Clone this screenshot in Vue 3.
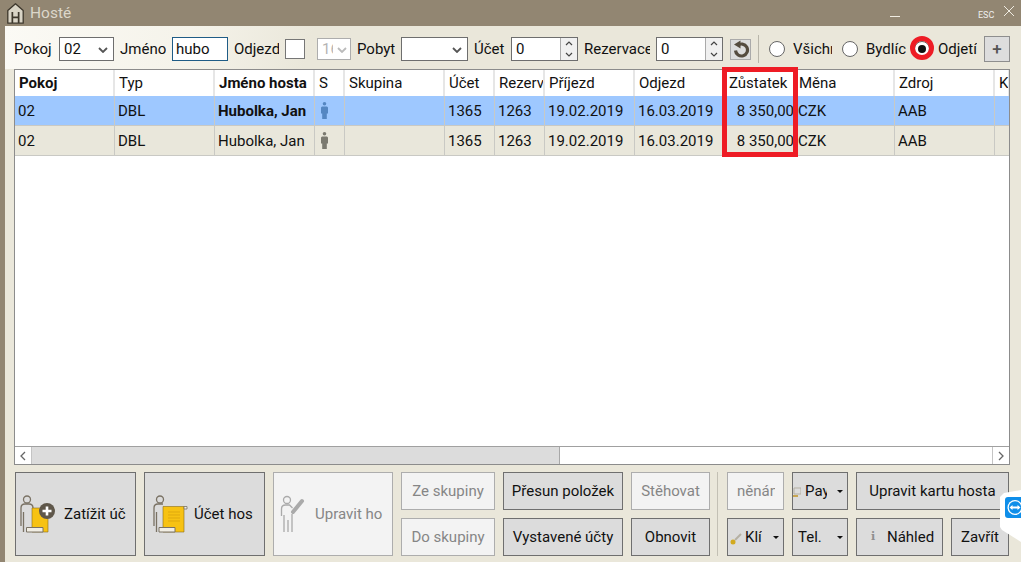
<script setup>
const columns = [
  { label: 'Pokoj', width: 100, bold: true },
  { label: 'Typ', width: 100 },
  { label: 'Jméno hosta', width: 100, bold: true },
  { label: 'S', width: 30 },
  { label: 'Skupina', width: 100 },
  { label: 'Účet', width: 50 },
  { label: 'Rezervace', width: 50 },
  { label: 'Příjezd', width: 90 },
  { label: 'Odjezd', width: 90 },
  { label: 'Zůstatek', width: 70 },
  { label: 'Měna', width: 100 },
  { label: 'Zdroj', width: 100 },
  { label: 'Kredit', width: 15 }
]
const gridTemplate = columns.map(c => c.width + 'px').join(' ')

const rows = [
  { selected: true, cells: ['02', 'DBL', 'Hubolka, Jan', '', '', '1365', '1263', '19.02.2019', '16.03.2019', '8 350,00', 'CZK', 'AAB', ''] },
  { selected: false, cells: ['02', 'DBL', 'Hubolka, Jan', '', '', '1365', '1263', '19.02.2019', '16.03.2019', '8 350,00', 'CZK', 'AAB', ''] }
]
</script>

<template>
  <div class="window">
    <header class="titlebar">
      <svg class="home" width="17" height="21" viewBox="0 0 17 21">
        <path d="M.8 20.200V7.500L8.500.8l7.700 6.700v12.700z" fill="#d9d4c6" stroke="#3d372c" stroke-width="1.300" stroke-linejoin="round" />
        <path d="M4.500 9h1.700v4.500h4.600V9h1.700v11h-1.700v-4.800H6.200V20H4.500z" fill="#3d372c" />
      </svg>
      <span class="title">Hosté</span>
      <span class="minimize"></span>
      <span class="esc">ESC</span>
      <svg class="close" width="14" height="10" viewBox="0 0 14 10">
        <path d="M2 0l10 10M12 0L2 10" stroke="#f0ece2" stroke-width="1" fill="none" />
      </svg>
    </header>

    <main class="content">
      <div class="toolbar">
        <span class="label w-39">Pokoj</span>
        <div class="field select w-55"><span>02</span><svg class="chev" width="10" height="6" viewBox="0 0 10 6"><path d="M1 1l4 4 4-4" /></svg></div>
        <span class="label w-46">Jméno</span>
        <div class="field focus w-56"><span>hubo</span></div>
        <span class="label w-45">Odjezd</span>
        <div class="check"></div>
        <div class="field select disabled w-34"><span>16</span><svg class="chev" width="10" height="6" viewBox="0 0 10 6"><path d="M1 1l4 4 4-4" /></svg></div>
        <span class="label w-38">Pobyt</span>
        <div class="field select w-67"><svg class="chev" width="10" height="6" viewBox="0 0 10 6"><path d="M1 1l4 4 4-4" /></svg></div>
        <span class="label w-31">Účet</span>
        <div class="field spin w-67">
          <span>0</span>
          <div class="spinner">
            <svg width="16" height="11" viewBox="0 0 16 11"><path d="M5 7l3-3 3 3" /></svg>
            <svg width="16" height="11" viewBox="0 0 16 11"><path d="M5 4l3 3 3-3" /></svg>
          </div>
        </div>
        <span class="label w-66">Rezervace</span>
        <div class="field spin w-67">
          <span>0</span>
          <div class="spinner">
            <svg width="16" height="11" viewBox="0 0 16 11"><path d="M5 7l3-3 3 3" /></svg>
            <svg width="16" height="11" viewBox="0 0 16 11"><path d="M5 4l3 3 3-3" /></svg>
          </div>
        </div>
        <button class="refresh">
          <svg width="18" height="18" viewBox="0 0 18 18">
            <path d="M5.500 5.500a6 6 0 1 1-2 5" fill="none" stroke="#554c3f" stroke-width="3.200" />
            <path d="M8.500 0.500v8L2 4.500z" fill="#554c3f" />
          </svg>
        </button>
        <span class="divider"></span>
        <span class="radio"></span>
        <span class="label radio-label w-39">Všichni</span>
        <span class="radio"></span>
        <span class="label radio-label w-40">Bydlíc</span>
        <span class="radio checked"></span>
        <span class="label odjeti">Odjetí</span>
        <button class="plus">+</button>
      </div>

      <section class="grid">
        <div class="row header" :style="{ gridTemplateColumns: gridTemplate }">
          <div v-for="col in columns" :key="col.label" class="cell" :class="{ bold: col.bold }">{{ col.label }}</div>
        </div>
        <div
          v-for="(row, r) in rows"
          :key="r"
          class="row body"
          :class="{ selected: row.selected }"
          :style="{ gridTemplateColumns: gridTemplate }"
        >
          <div
            v-for="(cell, c) in row.cells"
            :key="c"
            class="cell"
            :class="{ bold: c === 2 && row.selected, money: c === 9 }"
          >
            <svg v-if="c === 3" width="7" height="17" viewBox="0 0 7 17" class="person">
              <circle cx="3.500" cy="1.800" r="1.800" :fill="row.selected ? '#5587c2' : '#7b7a70'" />
              <path d="M1 4.500h5l1 1v6H5.800V17H1.200v-5.500H0v-6z" :fill="row.selected ? '#5587c2' : '#7b7a70'" />
            </svg>
            <template v-else>{{ cell }}</template>
          </div>
        </div>
        <div class="spacer"></div>
        <div class="scrollbar">
          <span class="arrow"><svg width="8" height="10" viewBox="0 0 8 10"><path d="M6 1L2 5l4 4" /></svg></span>
          <span class="thumb"></span>
          <span class="track"></span>
          <span class="arrow right"><svg width="8" height="10" viewBox="0 0 8 10"><path d="M2 1l4 4-4 4" /></svg></span>
        </div>
      </section>

      <footer class="actions">
        <button class="btn big">
          <svg width="38" height="38" viewBox="0 0 38 38" class="big-icon">
            <circle cx="7" cy="4.500" r="3.500" fill="none" stroke="#7a7264" stroke-width="1.300" />
            <path d="M1 31V13q0-4 4-4h4q4 0 4 4M3.500 37V17M10 37v-5" fill="none" stroke="#7a7264" stroke-width="1.300" />
            <path d="M12 13h16v24H12z" fill="#f7c213" stroke="#8a6d1b" stroke-width=".6" />
            <path d="M6.500 32.500H23v4.500H6.500z" fill="#f1eee4" stroke="#7a7264" stroke-width="1" />
            <circle cx="27" cy="16" r="8" fill="#5f574a" />
            <path d="M27 11.500v9M22.500 16h9" stroke="#fff" stroke-width="2.600" />
          </svg>
          <span class="big-label l-zatizit">Zatížit úč</span>
        </button>
        <button class="btn big">
          <svg width="38" height="38" viewBox="0 0 38 38" class="big-icon second">
            <circle cx="7" cy="4.500" r="3.500" fill="none" stroke="#7a7264" stroke-width="1.300" />
            <path d="M1 31V13q0-4 4-4h5M3.500 37V17" fill="none" stroke="#7a7264" stroke-width="1.300" />
            <path d="M10 11.500h21V37H10z" fill="#f7c213" stroke="#8a6d1b" stroke-width=".6" />
            <path d="M31 11.500h3V14h-3z" fill="#f1eee4" stroke="#7a7264" stroke-width=".8" />
            <path d="M15 17h12M15 20h12M15 23h12M15 26h12" stroke="#dfa90e" stroke-width="1" />
            <path d="M6 32.500h16v4.500H6z" fill="#f1eee4" stroke="#7a7264" stroke-width="1" />
          </svg>
          <span class="big-label l-ucet">Účet hos</span>
        </button>
        <button class="btn big off">
          <svg width="30" height="38" viewBox="0 0 30 38" class="big-icon edit">
            <circle cx="7" cy="5" r="3.500" fill="none" stroke="#aaa" stroke-width="1.300" />
            <path d="M1.500 21V14q0-4 4-4h4l3 3M4 37V20M8 37V25M12 37V19" fill="none" stroke="#aaa" stroke-width="1.300" />
            <path d="M13 17l9-11" stroke="#aaa" stroke-width="4" stroke-linecap="round" />
          </svg>
          <span class="big-label l-upravit">Upravit ho</span>
        </button>

        <div class="stack c-94">
          <button class="btn off">Ze skupiny</button>
          <button class="btn off">Do skupiny</button>
        </div>
        <div class="stack c-120">
          <button class="btn">Přesun položek</button>
          <button class="btn">Vystavené účty</button>
        </div>
        <div class="stack c-79">
          <button class="btn off">Stěhovat</button>
          <button class="btn">Obnovit</button>
        </div>
        <span class="vline"></span>
        <div class="stack c-57">
          <button class="btn off clip"><span>něnán</span></button>
          <button class="btn drop">
            <svg width="12" height="12" viewBox="0 0 12 12" class="key">
              <circle cx="3" cy="9" r="2.500" fill="#d2aa20" />
              <path d="M5 7l6-6" stroke="#b5b0a3" stroke-width="2" />
            </svg>
            <span class="drop-text k">Klí</span>
            <i class="caret"></i>
          </button>
        </div>
        <div class="stack c-56">
          <button class="btn drop">
            <svg width="8" height="10" viewBox="0 0 8 10" class="pay">
              <path d="M1 1h7v6H1z" fill="none" stroke="#b5b0a3" />
              <path d="M0 8h5v2H0z" fill="#c7a552" />
            </svg>
            <span class="drop-text p">Pay</span>
            <i class="caret"></i>
          </button>
          <button class="btn drop">
            <span class="drop-text t">Tel.</span>
            <i class="caret"></i>
          </button>
        </div>
        <div class="stack c-153">
          <button class="btn wide">Upravit kartu hosta</button>
          <div class="pair">
            <button class="btn nahled"><span class="info">i</span>Náhled</button>
            <button class="btn zavrit">Zavřít</button>
          </div>
        </div>
      </footer>

      <div class="mark mark-column"></div>
      <div class="mark mark-radio"></div>
      <div class="teamviewer">
        <svg width="20" height="21" viewBox="0 0 20 21">
          <rect width="20" height="21" rx="3" fill="#0e8ee9" />
          <circle cx="10" cy="10.500" r="7.500" fill="#fff" />
          <circle cx="10" cy="10.500" r="6.200" fill="#0e8ee9" />
          <path d="M4.500 10.500L7.500 8v1.500h5V8l3 2.500-3 2.500v-1.500h-5V13z" fill="#fff" />
        </svg>
      </div>
    </main>
  </div>
</template>

<style>
html, body {
  margin: 0;
  overflow: hidden;
}
</style>

<style scoped>
.window {
  width: 1021px;
  height: 562px;
  display: flex;
  flex-direction: column;
  background: #928672;
  font-family: Roboto, "Liberation Sans", sans-serif;
  font-size: 15px;
  color: #111;
  overflow: hidden;
}

.titlebar {
  height: 26px;
  flex: none;
  display: flex;
  align-items: center;
  padding-left: 7px;
  color: #dcd7ca;
}
.home { flex: none; }
.title { margin-left: 6px; font-size: 15.500px; }
.minimize {
  width: 10px;
  height: 1px;
  background: #f0ece2;
  margin-left: auto;
  margin-top: 7px;
}
.esc {
  margin-left: 78px;
  font-size: 9px;
  color: #eee;
  margin-top: 3px;
  width: 24px;
}
.close {
  margin-right: 5px;
  margin-top: -5px;
}

.content {
  position: relative;
  flex: 1;
  margin-left: 5px;
  display: flex;
  flex-direction: column;
  padding: 0 11px 6px 9px;
  background:
    linear-gradient(105deg, #fbfaf5 0, #f5f3ea 180px, #eae7da 300px) top left / 100% 43px no-repeat,
    #eae7da;
}

.toolbar {
  height: 43px;
  flex: none;
  display: flex;
  align-items: center;
  gap: 6px;
  padding-top: 3px;
  box-sizing: border-box;
}
.label {
  white-space: nowrap;
  overflow: hidden;
  flex: none;
}
.w-31 { width: 31px; }
.w-38 { width: 38px; }
.w-39 { width: 39px; }
.w-40 { width: 40px; }
.w-45 { width: 45px; }
.w-46 { width: 46px; }
.w-66 { width: 66px; }
.w-34 { width: 34px; margin-left: 6px; }
.w-55 { width: 55px; }
.w-56 { width: 56px; }
.w-67 { width: 67px; }

.field {
  position: relative;
  height: 24px;
  flex: none;
  box-sizing: border-box;
  border: 1px solid #6e6e6e;
  background: #fff;
  display: flex;
  align-items: center;
  padding-left: 4px;
  overflow: hidden;
}
.field.focus { border-color: #1f5c86; padding-left: 3px; }
.field.disabled { border-color: #adadad; color: #b4b4b4; height: 22px; }
.chev {
  position: absolute;
  right: 5px;
  top: 9px;
}
.chev path {
  fill: none;
  stroke: #555;
  stroke-width: 1.800;
}
.disabled .chev path { stroke: #bbb; }
.disabled .chev { top: 8px; right: 3px; }
.disabled span { width: 11px; overflow: hidden; }
.check {
  width: 20px;
  height: 20px;
  flex: none;
  box-sizing: border-box;
  border: 1px solid #767676;
  background: #fff;
}
.spinner {
  position: absolute;
  right: 0;
  top: 0;
  bottom: 0;
  width: 16px;
  border-left: 1px solid #aaa;
  background: #f0f0f0;
  display: flex;
  flex-direction: column;
}
.spinner svg { display: block; }
.spinner path {
  fill: none;
  stroke: #444;
  stroke-width: 1.200;
}
.refresh {
  width: 21px;
  height: 21px;
  flex: none;
  padding: 0;
  margin-left: 1px;
  border: 1px solid #aaa;
  background: #ddd;
  display: flex;
  align-items: center;
  justify-content: center;
}
.divider {
  width: 1px;
  height: 28px;
  background: #b9b6aa;
  flex: none;
  margin-left: 1px;
}
.radio {
  width: 16px;
  height: 16px;
  flex: none;
  box-sizing: border-box;
  border: 1px solid #666;
  border-radius: 50%;
  background: #fff;
  position: relative;
  margin-left: 4px;
}
.radio.checked { margin-left: 2px; }
.radio.checked::after {
  content: "";
  position: absolute;
  left: 3px;
  top: 3px;
  width: 8px;
  height: 8px;
  border-radius: 50%;
  background: #111;
}
.radio-label { margin-left: 2px; }
.odjeti { margin-left: 2px; width: 39px; }
.plus {
  width: 26px;
  height: 26px;
  flex: none;
  padding: 0;
  margin-left: 1px;
  border: 1px solid #8e8e8e;
  background: #ddd;
  font: 500 17px Roboto, sans-serif;
  color: #555;
}

.grid {
  height: 396px;
  flex: none;
  box-sizing: border-box;
  border: 1px solid #8c8c8c;
  background: #fff;
  display: flex;
  flex-direction: column;
  overflow: hidden;
}
.row {
  display: grid;
  flex: none;
}
.header { height: 26px; }
.header .cell {
  padding-left: 4px;
  border-right: 2px solid #e6e6e6;
}
.body {
  height: 30px;
  background: #e9e7db;
  border-bottom: 1px solid #c9c9c4;
  box-sizing: border-box;
}
.body.selected { background: #9ec8ff; }
.cell {
  display: flex;
  align-items: center;
  box-sizing: border-box;
  padding-left: 3px;
  border-right: 1px solid #c9c9c4;
  white-space: nowrap;
  overflow: hidden;
}
.bold { font-weight: 700; }
.money {
  justify-content: flex-end;
  padding-right: 0;
}
.person { margin-left: 3px; }
.spacer { flex: 1; }
.scrollbar {
  height: 17px;
  flex: none;
  display: flex;
  border-top: 1px solid #a0a0a0;
}
.arrow {
  width: 17px;
  flex: none;
  box-sizing: border-box;
  border-right: 1px solid #c4c4c4;
  display: flex;
  align-items: center;
  justify-content: center;
}
.arrow.right {
  border-right: 0;
  border-left: 1px solid #c4c4c4;
}
.arrow path {
  fill: none;
  stroke: #666;
  stroke-width: 1.300;
}
.thumb {
  width: 528px;
  flex: none;
  background: #dcdcdc;
  border-right: 1px solid #a8a8a8;
  box-sizing: border-box;
}
.track { flex: 1; }

.actions {
  display: flex;
  gap: 8px;
  margin-top: 7px;
  padding-left: 1px;
  height: 84px;
}
.btn {
  box-sizing: border-box;
  height: 38px;
  padding: 0;
  border: 1px solid #6f6f6f;
  background: #dcdcdc;
  font: 15px Roboto, "Liberation Sans", sans-serif;
  color: #111;
  white-space: nowrap;
  overflow: hidden;
  position: relative;
}
.btn.off {
  background: #f3f3f3;
  border-color: #adadad;
  color: #868686;
}
.btn.big {
  width: 121px;
  height: 84px;
  flex: none;
  display: flex;
  align-items: center;
}
.btn.big.off { width: 120px; }
.big-icon {
  flex: none;
  margin-left: 4px;
}
.big-icon.second { margin-left: 8px; }
.big-icon.edit { margin-left: 6px; }
.big-label {
  overflow: hidden;
  white-space: nowrap;
  text-align: left;
}
.l-zatizit { margin-left: 6px; width: 62px; }
.l-ucet { margin-left: 3px; width: 60px; }
.l-upravit { margin-left: 5px; width: 68px; }

.stack {
  display: flex;
  flex-direction: column;
  justify-content: space-between;
  flex: none;
}
.c-94 { width: 94px; }
.c-120 { width: 120px; }
.c-79 { width: 79px; }
.c-57 { width: 57px; }
.c-56 { width: 56px; }
.c-153 { width: 153px; }
.vline {
  width: 1px;
  flex: none;
  background: #c3c0b4;
  margin: 0 1px 0 -1px;
}
.clip {
  padding: 0 0 0 9px;
  text-align: left;
}
.clip span {
  display: block;
  width: 38px;
  overflow: hidden;
}
.drop-text {
  position: absolute;
  top: 9px;
  overflow: hidden;
}
.drop-text.k { left: 17px; }
.drop-text.p { left: 12px; width: 22px; }
.drop-text.t { left: 5px; }
.key {
  position: absolute;
  left: 2px;
  top: 14px;
}
.pay {
  position: absolute;
  left: 0;
  top: 14px;
}
.caret {
  position: absolute;
  right: 4px;
  top: 17px;
  width: 0;
  height: 0;
  border: 3px solid transparent;
  border-top-color: #111;
  border-bottom: 0;
}
.wide { width: 153px; }
.pair {
  display: flex;
  gap: 8px;
}
.nahled { width: 87px; padding-left: 30px; text-align: left; }
.zavrit { width: 58px; }
.info {
  position: absolute;
  left: 14px;
  top: 11px;
  font-family: "DejaVu Serif", serif;
  font-size: 11px;
  font-weight: 700;
  color: #8f8f8f;
}

.mark {
  position: absolute;
  box-sizing: border-box;
  pointer-events: none;
}
.mark-column {
  left: 717px;
  top: 41px;
  width: 76px;
  height: 90px;
  border: 5px solid #ee1c25;
}
.mark-radio {
  left: 905px;
  top: 10px;
  width: 24px;
  height: 24px;
  border: 5px solid #ee1c25;
  border-radius: 50%;
}
.teamviewer {
  position: absolute;
  right: 0;
  top: 464px;
  width: 21px;
  height: 52px;
  background: #fff;
  clip-path: polygon(4px 3px, 21px 0, 21px 52px, 2px 40px, 0 37px, 0 7px);
  padding: 7px 0 0 5px;
  box-sizing: border-box;
  overflow: hidden;
}
</style>
